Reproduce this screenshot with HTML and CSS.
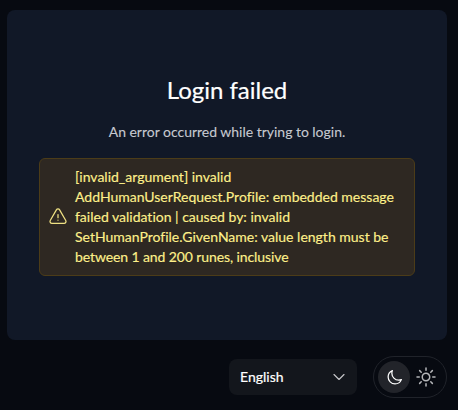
FILE: index.html
```html
<!DOCTYPE html>
<html lang="en">
<head>
<meta charset="utf-8">
<title>Login failed</title>
<link rel="stylesheet" href="styles.css">
</head>
<body>
<main class="card">
  <h1 class="title">Login failed</h1>
  <p class="subtitle">An error occurred while trying to login.</p>
  <div class="alert" role="alert">
    <svg class="alert-icon" viewBox="0 0 24 24" fill="none" stroke="currentColor" stroke-width="1.5" stroke-linecap="round" stroke-linejoin="round"><path d="M12 9v3.75m-9.303 3.376c-.866 1.5.217 3.374 1.948 3.374h14.71c1.73 0 2.813-1.874 1.948-3.374L13.949 3.378c-.866-1.5-3.032-1.5-3.898 0L2.697 16.126zM12 15.75h.007v.008H12v-.008z"/></svg>
    <span class="alert-text">[invalid_argument] invalid AddHumanUserRequest.Profile: embedded message failed validation | caused by: invalid SetHumanProfile.GivenName: value length must be <span class="range">between 1 and 200 runes, inclusive</span></span>
  </div>
</main>
<footer class="controls">
  <button class="language">English
    <svg class="chevron" viewBox="0 0 24 24" fill="none" stroke="currentColor" stroke-width="1.75" stroke-linecap="round" stroke-linejoin="round"><path d="M19.5 8.25l-7.5 7.5-7.5-7.5"/></svg>
  </button>
  <div class="theme">
    <span class="mode active"><svg class="moon" viewBox="0 0 24 24" fill="none" stroke="currentColor" stroke-width="1.75" stroke-linecap="round" stroke-linejoin="round"><path d="M21.752 15.002A9.718 9.718 0 0118 15.75c-5.385 0-9.75-4.365-9.75-9.75 0-1.33.266-2.597.748-3.752A9.753 9.753 0 003 11.25C3 16.635 7.365 21 12.75 21a9.753 9.753 0 009.002-5.998z"/></svg></span>
    <span class="mode"><svg class="sun" viewBox="0 0 24 24" fill="none" stroke="currentColor" stroke-width="1.5" stroke-linecap="round" stroke-linejoin="round"><path d="M12 3v2.25m6.364.386l-1.591 1.591M21 12h-2.25m-.386 6.364l-1.591-1.591M12 18.75V21m-4.773-4.227l-1.591 1.591M5.25 12H3m4.227-4.773L5.636 5.636M15.75 12a3.75 3.75 0 11-7.5 0 3.75 3.75 0 017.5 0z"/></svg></span>
  </div>
</footer>
</body>
</html>
```

FILE: styles.css
```css
* { box-sizing: border-box; }
body {
  margin: 0;
  height: 410px;
  padding: 10px 11px 0 7px;
  background: #070a11;
  color: #fff;
  font-family: Lato, sans-serif;
  font-size: 14px;
  line-height: 20px;
  overflow: hidden;
}
.card {
  height: 330px;
  padding: 64px 32px 0;
  border-radius: 8px;
  background: #111827;
  display: flex;
  flex-direction: column;
  align-items: center;
}
.title { margin: 0; font-size: 24px; font-weight: 400; line-height: 32px; -webkit-text-stroke: 0.2px; }
.subtitle { margin: 16px 0; color: #c6c9d0; word-spacing: -0.1px; -webkit-text-stroke: 0.1px; }
.alert {
  width: 376px;
  height: 118px;
  padding: 8px;
  display: flex;
  align-items: center;
  border: 1px solid #4c3c18;
  border-radius: 6px;
  background: #2e2822;
  color: #fef08a;
}
.alert-icon { flex: none; width: 20px; height: 20px; margin-right: 7px; color: #efe183; }
.alert-text { font-variant-ligatures: none; -webkit-text-stroke: 0.15px; }
.range { letter-spacing: -0.1px; }
.controls { display: flex; justify-content: flex-end; align-items: center; gap: 16px; padding-top: 16px; }
.language {
  width: 128px;
  height: 36px;
  padding: 0 10px 0 11px;
  display: flex;
  justify-content: space-between;
  align-items: center;
  border: 0;
  border-radius: 8px;
  background: #13161c;
  color: #fff;
  font: 14px/20px Lato, sans-serif;
  -webkit-text-stroke: 0.2px;
}
.chevron { width: 16px; height: 16px; color: #c4c5c8; }
.theme { display: flex; align-items: center; width: 74px; height: 42px; padding: 4px; border: 1px solid #20232a; border-radius: 21px; }
.mode { width: 32px; height: 32px; display: flex; align-items: center; justify-content: center; border-radius: 50%; color: #b4b5b8; }
.active { background: #22242a; color: #fff; }
.moon { width: 17px; height: 17px; }
.sun { width: 24px; height: 24px; }
```
